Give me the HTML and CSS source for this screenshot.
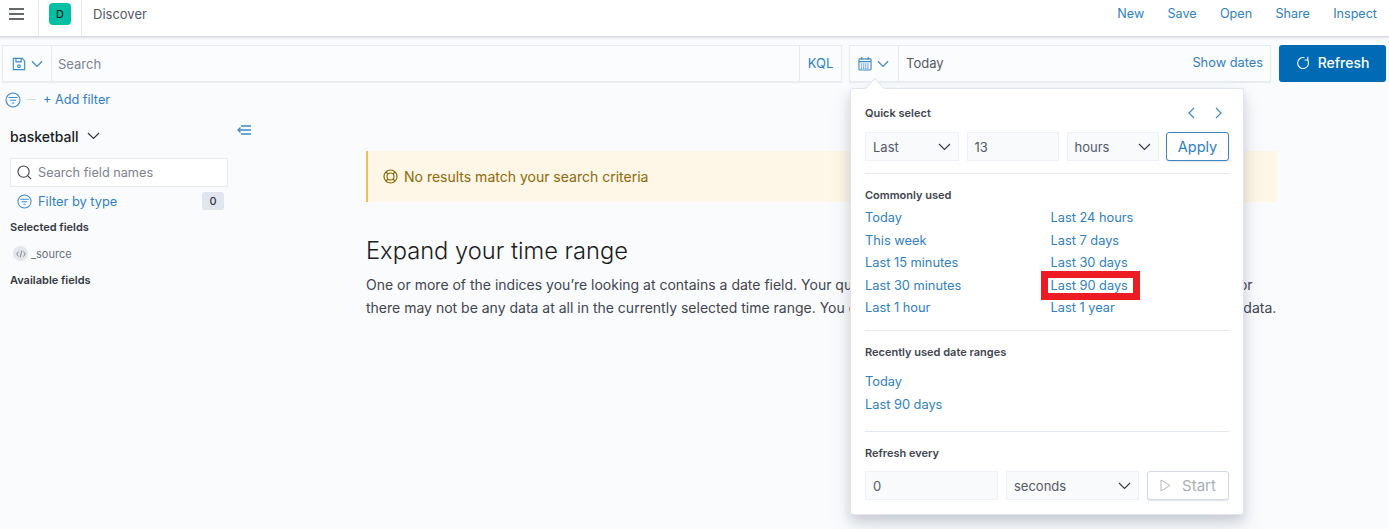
FILE: index.html
```html
<!DOCTYPE html>
<html lang="en">
<head>
  <meta charset="UTF-8">
  <title>Discover</title>
  <link rel="stylesheet" href="styles.css">
</head>
<body>
  <header class="topbar">
    <div class="menu-cell">
      <svg width="16" height="14" viewBox="0 0 16 14"><path d="M1 2h15M1 7h15M1 12h15" stroke="#343741" stroke-width="1.6" fill="none"/></svg>
    </div>
    <div class="logo-cell"><span class="space-badge">D</span></div>
    <div class="crumb">Discover</div>
    <nav class="top-links">
      <a>New</a><a>Save</a><a>Open</a><a>Share</a><a>Inspect</a>
    </nav>
  </header>

  <section class="querybar">
    <div class="search-group">
      <div class="saved-btn">
        <svg width="14" height="14" viewBox="0 0 16 16" fill="none" stroke="#3b8ac9" stroke-width="1.300"><path d="M1.500 1.500h10l3 3v10h-13z"/><path d="M4.500 1.500v4h6v-4"/><circle cx="8" cy="10.500" r="1.500"/></svg>
        <svg class="chev" width="12" height="8" viewBox="0 0 13 8"><path d="M1 1l5.500 5.500L12 1" stroke="#3b8ac9" stroke-width="1.300" fill="none"/></svg>
      </div>
      <div class="search-text">Search</div>
      <div class="kql">KQL</div>
    </div>
    <div class="date-group">
      <div class="cal-btn">
        <svg width="14" height="15" viewBox="0 0 15 15" fill="none" stroke="#3b8ac9" stroke-width="1.200"><rect x="1" y="2.500" width="13" height="12" rx="1"/><path d="M1 5.500h13M4 .5v3M11 .5v3"/><path d="M3 8h9M3 10.200h9M3 12.400h9" stroke-dasharray="1.500 .8"/></svg>
        <svg class="chev" width="12" height="8" viewBox="0 0 13 8"><path d="M1 1l5.500 5.500L12 1" stroke="#3b8ac9" stroke-width="1.300" fill="none"/></svg>
      </div>
      <div class="date-text">Today</div>
      <a class="show-dates">Show dates</a>
    </div>
    <button class="refresh-btn">
      <svg width="14" height="14" viewBox="0 0 14 14" fill="none" stroke="#fff" stroke-width="1.100"><path d="M11.700 4A5.500 5.500 0 1 1 8.500 1.700"/><path d="M11.800 .8V4H8.600"/></svg>
      Refresh
    </button>
  </section>

  <div class="filterbar">
    <svg width="16" height="16" viewBox="0 0 16 16" fill="none" stroke="#3b8ac9" stroke-width="1.100"><circle cx="8" cy="8" r="7"/><path d="M3.500 5.500h9M5 8.200h6M6.800 11h2.400"/></svg>
    <span class="filter-dash"></span>
    <a class="add-filter">+ Add filter</a>
  </div>

  <div class="page">
    <aside class="sidebar">
      <div class="index-row">
        <div class="index-name">basketball
          <svg width="13" height="8" viewBox="0 0 13 8"><path d="M1 1l5.500 5.500L12 1" stroke="#343741" stroke-width="1.200" fill="none"/></svg>
        </div>
        <svg class="collapse" width="14" height="10" viewBox="0 0 14 10" fill="none" stroke="#3b8ac9" stroke-width="1.300"><path d="M4 1h10M2 5h12M4 9h10"/><path d="M3.500 2.500L1 5l2.500 2.500" /></svg>
      </div>
      <div class="field-search">
        <svg width="15" height="15" viewBox="0 0 16 16" fill="none" stroke="#343741" stroke-width="1.100"><circle cx="7" cy="7" r="6"/><path d="M11.500 11.500l3.500 3.500"/></svg>
        Search field names
      </div>
      <div class="type-row">
        <svg width="15" height="15" viewBox="0 0 16 16" fill="none" stroke="#3b8ac9" stroke-width="1.100"><circle cx="8" cy="8" r="7"/><path d="M3.500 5.500h9M5 8.200h6M6.800 11h2.400"/></svg>
        <a>Filter by type</a>
        <span class="count">0</span>
      </div>
      <h4 class="side-title">Selected fields</h4>
      <div class="field-row">
        <span class="field-icon">
          <svg width="10" height="8" viewBox="0 0 10 8" fill="none" stroke="#69707d" stroke-width=".8"><path d="M2.500 1.500L.7 4l1.800 2.500M7.500 1.500L9.300 4 7.500 6.500M5.800 .5L4.200 7.500"/></svg>
        </span>
        _source
      </div>
      <h4 class="side-title avail">Available fields</h4>
    </aside>

    <main class="content">
      <div class="callout">
        <svg width="15" height="15" viewBox="0 0 15 15" fill="none" stroke="#8a6a0a" stroke-width="1.200"><circle cx="7.500" cy="7.500" r="6.500"/><circle cx="7.500" cy="7.500" r="3.500"/><path d="M3 3l2 2M12 3l-2 2M3 12l2-2M12 12l-2-2"/></svg>
        No results match your search criteria
      </div>
      <h2 class="expand-title">Expand your time range</h2>
      <p class="expand-text">One or more of the indices you’re looking at contains a date field. Your query may not match anything within the current time range, or there may not be any data at all in the currently selected time range. You can also try changing the time range to one which contains data.</p>
    </main>
  </div>

  <!-- date picker popover, sits over the page -->
  <div class="popover">
    <span class="arrow"></span>
    <div class="pop-section quick">
      <div class="quick-head">
        <h4 class="pop-title">Quick select</h4>
        <div class="pager">
          <svg width="8" height="12" viewBox="0 0 8 12"><path d="M7 1L2 6l5 5" stroke="#3b8ac9" stroke-width="1.200" fill="none"/></svg>
          <svg width="8" height="12" viewBox="0 0 8 12"><path d="M1 1l5 5-5 5" stroke="#3b8ac9" stroke-width="1.200" fill="none"/></svg>
        </div>
      </div>
      <div class="quick-form">
        <div class="control sel-last">Last <svg class="sel-chev" width="13" height="8" viewBox="0 0 13 8"><path d="M1 1l5.500 5.500L12 1" stroke="#343741" stroke-width="1.100" fill="none"/></svg></div>
        <div class="control num-13">13</div>
        <div class="control sel-hours">hours <svg class="sel-chev" width="13" height="8" viewBox="0 0 13 8"><path d="M1 1l5.500 5.500L12 1" stroke="#343741" stroke-width="1.100" fill="none"/></svg></div>
        <button class="apply-btn">Apply</button>
      </div>
    </div>
    <div class="pop-section common">
      <h4 class="pop-title">Commonly used</h4>
      <ul class="common-list">
        <li><a>Today</a></li>
        <li><a>Last 24 hours</a></li>
        <li><a>This week</a></li>
        <li><a>Last 7 days</a></li>
        <li><a>Last 15 minutes</a></li>
        <li><a>Last 30 days</a></li>
        <li><a>Last 30 minutes</a></li>
        <li><a class="marked">Last 90 days</a></li>
        <li><a>Last 1 hour</a></li>
        <li><a>Last 1 year</a></li>
      </ul>
    </div>
    <div class="pop-section recent">
      <h4 class="pop-title">Recently used date ranges</h4>
      <ul class="recent-list">
        <li><a>Today</a></li>
        <li><a>Last 90 days</a></li>
      </ul>
    </div>
    <div class="pop-section every">
      <h4 class="pop-title">Refresh every</h4>
      <div class="every-form">
        <div class="control num-0">0</div>
        <div class="control sel-seconds">seconds <svg class="sel-chev" width="13" height="8" viewBox="0 0 13 8"><path d="M1 1l5.500 5.500L12 1" stroke="#343741" stroke-width="1.100" fill="none"/></svg></div>
        <button class="start-btn">
          <svg width="11" height="13" viewBox="0 0 11 13"><path d="M1 1l9 5.500-9 5.500z" stroke="#b4b8bf" stroke-width="1" fill="none"/></svg>
          Start
        </button>
      </div>
    </div>
  </div>
</body>
</html>
```
FILE: styles.css
```css
* {
  box-sizing: border-box;
}
html, body {
  height: 100%;
}
body {
  margin: 0;
  background-color: #fafbfd;
  color: #343741;
  font-family: Inter, "Liberation Sans", sans-serif;
  font-size: 14px;
  overflow: hidden;
  position: relative;
}
a {
  color: #2f80c2;
}
ul, h2, h4, p {
  margin: 0;
  padding: 0;
}
ul {
  list-style: none;
}

/* top bar */
.topbar {
  height: 37px;
  background-color: #fff;
  border-bottom: 1px solid #d3dae6;
  box-shadow: 0 1px 2px rgba(65, 78, 101, 0.15);
  display: flex;
  align-items: stretch;
}
.menu-cell {
  width: 39px;
  border-right: 1px solid #e6ebf2;
  padding: 7px 0 0 8px;
}
.logo-cell {
  width: 43px;
  border-right: 1px solid #e6ebf2;
  padding: 3px 0 0 10px;
}
.space-badge {
  display: flex;
  width: 22px;
  height: 22px;
  border-radius: 4px;
  background-color: #00bfa5;
  color: #1a1c21;
  font-size: 11px;
  font-weight: 500;
  align-items: center;
  justify-content: center;
}
.crumb {
  padding: 6px 0 0 11px;
  font-size: 13px;
  line-height: 16px;
  color: #535966;
}
.top-links {
  margin-left: auto;
  display: flex;
  gap: 23.300px;
  padding: 6px 12px 0 0;
  font-size: 12.600px;
  line-height: 16px;
}

/* query bar */
.querybar {
  display: flex;
  padding: 8px 3px 0 2px;
  height: 45px;
}
.search-group, .date-group {
  display: flex;
  align-items: center;
  height: 37px;
  background-color: #fbfcfd;
  border: 1px solid #e6ebf2;
  box-shadow: 0 1px 1px rgba(65, 78, 101, 0.08);
}
.search-group {
  width: 840px;
}
.saved-btn {
  width: 49px;
  height: 100%;
  border-right: 1px solid #e6ebf2;
  display: flex;
  align-items: center;
  padding-left: 9px;
  gap: 5px;
}
.search-text {
  flex: 1;
  padding-left: 6px;
  color: #7b8290;
  font-size: 13px;
}
.kql {
  width: 42px;
  height: 100%;
  border-left: 1px solid #e6ebf2;
  color: #2f80c2;
  font-size: 13px;
  padding-bottom: 2px;
  display: flex;
  align-items: center;
  justify-content: center;
}
.date-group {
  margin-left: 7px;
  width: 422px;
}
.cal-btn {
  width: 49px;
  height: 100%;
  border-right: 1px solid #e6ebf2;
  display: flex;
  align-items: center;
  padding-left: 8px;
  gap: 5px;
}
.date-text {
  flex: 1;
  padding: 0 0 2px 7px;
  font-size: 13px;
  color: #535966;
}
.show-dates {
  padding: 0 7px 2px 0;
  font-size: 12.800px;
}
.refresh-btn {
  margin-left: 8px;
  width: 107px;
  height: 37px;
  border: 0;
  border-radius: 3px;
  background-color: #006bb4;
  color: #fff;
  font-family: inherit;
  font-size: 14px;
  font-weight: 500;
  padding: 0 0 2px;
  display: flex;
  align-items: center;
  justify-content: center;
  gap: 8px;
}

/* filters */
.filterbar {
  height: 34px;
  display: flex;
  align-items: center;
  padding: 1px 0 0 5px;
  font-size: 12.700px;
}
.filter-dash {
  width: 9px;
  height: 1px;
  margin: 0 7px 0 6px;
  background-color: #d3dae6;
}

/* page */
.page {
  display: flex;
}
.sidebar {
  width: 366px;
  padding: 0 0 0 10px;
}
.index-row {
  width: 241px;
  display: flex;
  align-items: center;
  justify-content: space-between;
  padding-top: 9px;
  height: 31px;
}
.collapse {
  margin-top: -12px;
}
.index-name {
  font-size: 14px;
  font-weight: 500;
  color: #1a1c21;
  display: flex;
  align-items: center;
  gap: 8px;
}
.field-search {
  width: 218px;
  height: 29px;
  margin-top: 11px;
  background-color: #fff;
  border: 1px solid #e6ebf2;
  color: #7b8290;
  font-size: 12.700px;
  display: flex;
  align-items: center;
  gap: 6px;
  padding-left: 6px;
}
.type-row {
  width: 214px;
  height: 26px;
  margin-top: 1px;
  padding-left: 7px;
  display: flex;
  align-items: center;
  gap: 6px;
  font-size: 12.800px;
}
.count {
  margin-left: auto;
  width: 22px;
  height: 18px;
  border-radius: 3px;
  background-color: #e0e5ee;
  font-size: 11px;
  font-weight: 500;
  display: flex;
  align-items: center;
  justify-content: center;
}
.side-title {
  font-size: 11px;
  font-weight: 600;
  line-height: 14px;
  margin-top: 6px;
  color: #343741;
}
.side-title.avail {
  margin-top: 12px;
}
.field-row {
  display: flex;
  align-items: center;
  gap: 3px;
  margin-top: 12px;
  padding-left: 3px;
  font-size: 11px;
  color: #69707d;
}
.field-icon {
  width: 15px;
  height: 15px;
  border-radius: 50%;
  background-color: #e4e6ea;
  display: flex;
  align-items: center;
  justify-content: center;
}

/* main column */
.content {
  width: 911px;
}
.callout {
  height: 51px;
  margin-top: 35px;
  background-color: #fef6e6;
  border-left: 2px solid #f5bd4f;
  color: #8a6a0a;
  font-size: 14px;
  display: flex;
  align-items: center;
  gap: 6px;
  padding-left: 15px;
}
.expand-title {
  font-size: 23.700px;
  font-weight: 300;
  line-height: 30px;
  margin-top: 34px;
  color: #1a1c21;
}
.expand-text {
  margin-top: 7px;
  font-size: 14px;
  line-height: 23px;
  color: #414550;
}

/* date popover */
.popover {
  position: absolute;
  left: 850px;
  top: 88px;
  width: 394px;
  height: 427px;
  background-color: #fff;
  border: 1px solid #e0e5ee;
  border-radius: 3px;
  box-shadow: 0 6px 12px rgba(65, 78, 101, 0.2), 0 12px 24px rgba(65, 78, 101, 0.1);
  padding: 0 14px;
}
.arrow {
  position: absolute;
  left: 17px;
  top: -8px;
  width: 14px;
  height: 14px;
  background-color: #fff;
  border-left: 1px solid #e0e5ee;
  border-top: 1px solid #e0e5ee;
  transform: rotate(45deg);
}
.pop-title {
  font-size: 11px;
  font-weight: 600;
  line-height: 14px;
  color: #414550;
}
.pop-section {
  border-bottom: 1px solid #e3e8f0;
}
.pop-section.every {
  border-bottom: 0;
}
.quick {
  height: 85px;
  padding-top: 17px;
}
.quick-head {
  display: flex;
  justify-content: space-between;
  align-items: center;
  padding-right: 6px;
}
.pager {
  display: flex;
  gap: 20px;
}
.quick-form, .every-form {
  display: flex;
  gap: 8px;
  margin-top: 12px;
}
.control {
  height: 29px;
  background-color: #f9fafc;
  border: 1px solid #eef1f6;
  font-size: 13px;
  color: #535966;
  display: flex;
  align-items: center;
  justify-content: space-between;
  padding: 0 7px;
}
.sel-last { width: 93.500px; }
.num-13 { width: 92px; }
.sel-hours { width: 92.500px; }
.apply-btn {
  width: 63px;
  height: 29px;
  margin-left: -1px;
  background-color: #fff;
  border: 1px solid #3b84c4;
  border-radius: 3px;
  color: #2f80c2;
  font-family: inherit;
  font-size: 14.500px;
  padding: 0;
  box-shadow: 0 1px 1px rgba(65, 78, 101, 0.15);
}
.common {
  height: 157px;
  padding-top: 14px;
}
.common-list {
  display: grid;
  grid-template-columns: 185.500px 1fr;
  grid-auto-rows: 22.500px;
  margin-top: 6px;
  font-size: 12.800px;
  line-height: 20px;
}
.marked {
  display: inline-block;
  line-height: 15px;
  padding: 0 5px 0 3px;
  margin-left: -3px;
  outline: 7px solid #ed1c24;
}
.recent {
  height: 101px;
  padding-top: 14px;
}
.recent-list {
  margin-top: 12px;
  font-size: 12.800px;
  line-height: 22.500px;
}
.every {
  padding-top: 14px;
}
.every-form {
  margin-top: 11px;
}
.num-0 { width: 133px; }
.sel-seconds { width: 133px; }
.start-btn {
  width: 82px;
  height: 29px;
  background-color: #fff;
  border: 1px solid #d3dae6;
  border-radius: 3px;
  color: #a9aeb6;
  font-family: inherit;
  font-size: 15px;
  display: flex;
  align-items: center;
  justify-content: center;
  gap: 11px;
  padding: 0;
  box-shadow: 0 1px 1px rgba(65, 78, 101, 0.15);
}
```
